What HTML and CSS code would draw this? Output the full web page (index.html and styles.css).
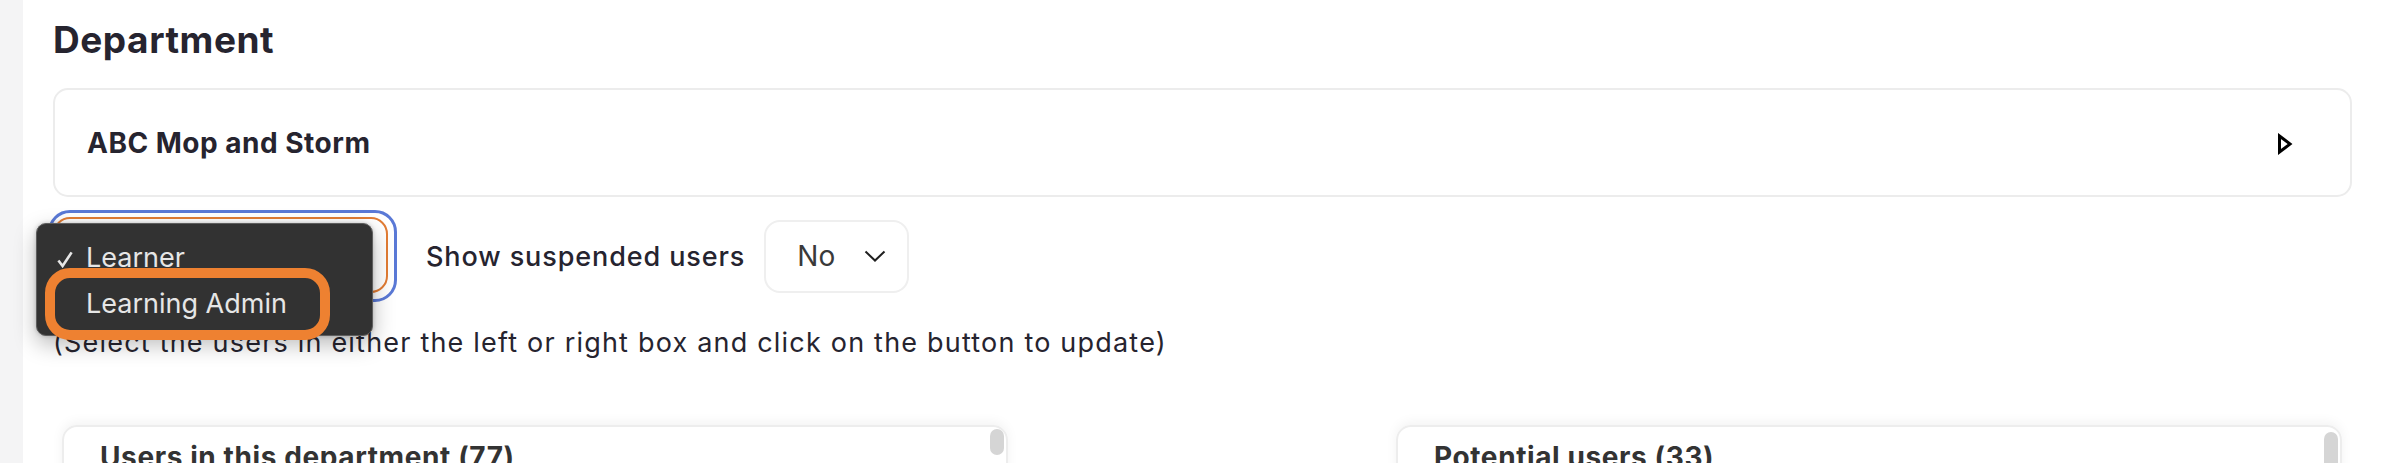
FILE: index.html
```html
<!DOCTYPE html>
<html lang="en">
<head>
<meta charset="utf-8">
<title>Department</title>
<link rel="stylesheet" href="styles.css">
</head>
<body>
<div class="page">
  <aside class="sidebar-edge"></aside>
  <main class="content">
    <h2 class="title">Department</h2>

    <div class="dept-card">
      <span class="dept-name">ABC Mop and Storm</span>
      <svg class="dept-toggle" width="16" height="22" viewBox="0 0 16 22" aria-hidden="true">
        <polygon points="2.5,3 13,11 2.5,19" fill="none" stroke="#000" stroke-width="3" stroke-linejoin="miter"/>
      </svg>
    </div>

    <div class="filters">
      <div class="focus-ring">
        <div class="role-select"></div>
        <div class="menu">
          <div class="menu-item">
            <svg class="check" width="16" height="17" viewBox="0 0 16 17" aria-hidden="true">
              <polyline points="1.4,9.5 5.6,15 14.6,1.4" fill="none" stroke="#e6e6e6" stroke-width="2.6"/>
            </svg>Learner</div>
          <div class="menu-item">Learning Admin</div>
          <div class="menu-highlight"></div>
        </div>
      </div>
      <span class="filter-label">Show suspended users</span>
      <div class="small-select">
        <span class="small-select-value">No</span>
        <svg class="chevron" width="22" height="12" viewBox="0 0 22 12" aria-hidden="true">
          <polyline points="1.5,1.5 11,10.5 20.5,1.5" fill="none" stroke="#1f1f1f" stroke-width="2"/>
        </svg>
      </div>
    </div>

    <p class="hint">(Select the users in either the left or right box and click on the button to update)</p>

    <div class="panels">
      <section class="panel">
        <h3 class="panel-title">Users in this department (77)</h3>
        <div class="scroll-thumb"></div>
      </section>
      <section class="panel">
        <h3 class="panel-title">Potential users (33)</h3>
        <div class="scroll-thumb scroll-thumb-right"></div>
      </section>
    </div>
  </main>
</div>
</body>
</html>
```

FILE: styles.css
```css
* { box-sizing: border-box; }

html, body {
  margin: 0;
  padding: 0;
  background: #ffffff;
  height: 100%;
  overflow: hidden;
}

body {
  font-family: Inter, "Noto Sans", "Liberation Sans", sans-serif;
  color: #27252f;
}

.page {
  display: flex;
  min-height: 100%;
}

.sidebar-edge {
  flex: 0 0 23px;
  background: #f4f4f5;
}

.content {
  flex: 1;
  padding: 17px 47px 0 30px;
}

.title {
  margin: 0;
  font-size: 37px;
  line-height: 46px;
  font-weight: 700;
  letter-spacing: 0.55px;
  color: #26242f;
}

.dept-card {
  margin-top: 25px;
  height: 109px;
  border: 2px solid #ececec;
  border-radius: 15px;
  display: flex;
  align-items: center;
  justify-content: space-between;
  padding: 0 57px 0 32px;
}

.dept-name {
  font-size: 28px;
  font-weight: 700;
  letter-spacing: 0.5px;
  color: #26242f;
}

.dept-toggle { display: block; margin-top: 2px; }

.filters {
  margin-top: 13px;
  display: flex;
  align-items: center;
}

.focus-ring {
  position: relative;
  margin-left: -5px;
  width: 349px;
  height: 92px;
  border: 3px solid #5a79d6;
  border-radius: 22px;
  padding: 4px 6px 6px 2px;
}

.role-select {
  width: 100%;
  height: 100%;
  border: 2px solid #e27c34;
  border-radius: 17px;
  background: #fff;
}

.menu {
  position: absolute;
  left: -15px;
  top: 10px;
  width: 337px;
  height: 113px;
  background: #323232;
  border: 1px solid #5e5e5e;
  border-radius: 10px;
  box-shadow: 0 8px 22px rgba(0, 0, 0, 0.28), 0 0 4px rgba(0, 0, 0, 0.2);
  padding: 11px 0 0 21px;
  font-family: Inter, "Liberation Sans", sans-serif;
  color: #e6e6e6;
  z-index: 2;
}

.menu-item {
  position: relative;
  font-size: 27px;
  line-height: 46px;
  padding-left: 28px;
}

.check {
  position: absolute;
  left: -1px;
  top: 16px;
}

.menu-highlight {
  position: absolute;
  left: 8px;
  top: 44px;
  width: 285px;
  height: 72px;
  border: 10px solid #ee8131;
  border-radius: 25px;
}

.filter-label {
  margin-left: 29px;
  font-size: 27px;
  font-weight: 500;
  letter-spacing: 0.9px;
  color: #26242f;
}

.small-select {
  margin-left: 19px;
  width: 145px;
  height: 73px;
  border: 2px solid #efefef;
  border-radius: 16px;
  display: flex;
  align-items: center;
  padding-left: 31px;
}

.small-select-value {
  font-size: 28px;
  color: #3a3a3a;
}

.chevron {
  display: block;
  margin-left: 29px;
}

.hint {
  margin: 23px 0 0;
  font-size: 27px;
  line-height: 36px;
  font-weight: 400;
  letter-spacing: 1.2px;
  color: #26242f;
}

.panels {
  margin-top: 64px;
  padding: 0 10px 0 9px;
  display: flex;
  justify-content: space-between;
}

.panel {
  position: relative;
  width: 946px;
  height: 300px;
  border: 2px solid #ededed;
  border-radius: 15px;
  box-shadow: 0 -3px 12px rgba(0, 0, 0, 0.05);
  padding: 10px 36px;
}

.panel-title {
  margin: 0;
  font-size: 28px;
  line-height: 40px;
  font-weight: 700;
  letter-spacing: 0.6px;
  color: #333;
}

.scroll-thumb {
  position: absolute;
  right: 2px;
  top: 2px;
  width: 14px;
  height: 26px;
  border-radius: 7px;
  background: #d5d5d5;
}

.scroll-thumb-right { top: 5px; height: 60px; }
```
